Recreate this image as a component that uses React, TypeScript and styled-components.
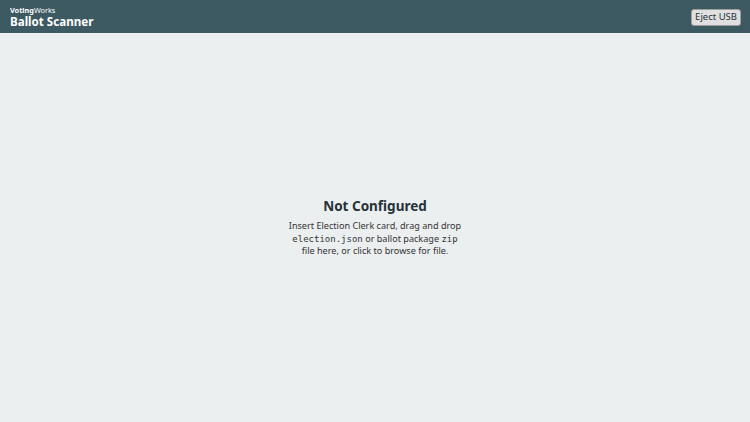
import React from "react";
import styled, { createGlobalStyle } from "styled-components";

const Global = createGlobalStyle`
  html, body { margin: 0; padding: 0; height: 100%; }
  body { font-family: "Noto Sans", "Open Sans", sans-serif; background: #ebeff0; color: #263238; }
  #root { height: 100%; }
`;

const Page = styled.div`
  display: flex;
  flex-direction: column;
  height: 422px;
  width: 750px;
`;

const Header = styled.header`
  display: flex;
  align-items: center;
  justify-content: space-between;
  height: 33px;
  padding: 0 9px 0 10px;
  background: #3d5a62;
  color: #ffffff;
  box-sizing: border-box;
`;

const Brand = styled.div`
  display: flex;
  flex-direction: column;
  margin-top: 1px;
`;

const Maker = styled.div`
  font-size: 7.3px;
  line-height: 9px;
  font-weight: 700;
  & span { font-weight: 400; }
`;

const Title = styled.div`
  font-size: 11.6px;
  line-height: 13px;
  font-weight: 700;
`;

const HeaderButton = styled.button`
  font-family: inherit;
  font-size: 9.5px;
  color: #263238;
  background: #e0e0e0;
  border: 1px solid #9e9e9e;
  border-radius: 3px;
  padding: 0 3px;
  height: 17px;
  line-height: 1;
  margin-top: 1px;
`;

const Main = styled.main`
  flex: 1;
  display: flex;
  flex-direction: column;
  align-items: center;
  justify-content: center;
  padding-top: 0;
`;

const Heading = styled.h1`
  font-size: 13.5px;
  line-height: 18px;
  font-weight: 700;
  margin: 0 0 5px;
  color: #263238;
`;

const Message = styled.p`
  margin: 0;
  font-size: 9.1px;
  line-height: 12.5px;
  text-align: center;
  color: #333;
`;

const Code = styled.code`
  font-family: "DejaVu Sans Mono", "Liberation Mono", monospace;
  font-size: 9px;
`;

export default function App() {
  return (
    <>
      <Global />
      <Page>
        <Header>
          <Brand>
            <Maker>
              Voting<span>Works</span>
            </Maker>
            <Title>Ballot Scanner</Title>
          </Brand>
          <HeaderButton>Eject USB</HeaderButton>
        </Header>
        <Main>
          <Heading>Not Configured</Heading>
          <Message>
            Insert Election Clerk card, drag and drop
            <br />
            <Code>election.json</Code> or ballot package <Code>zip</Code>
            <br />
            file here, or click to browse for file.
          </Message>
        </Main>
      </Page>
    </>
  );
}
